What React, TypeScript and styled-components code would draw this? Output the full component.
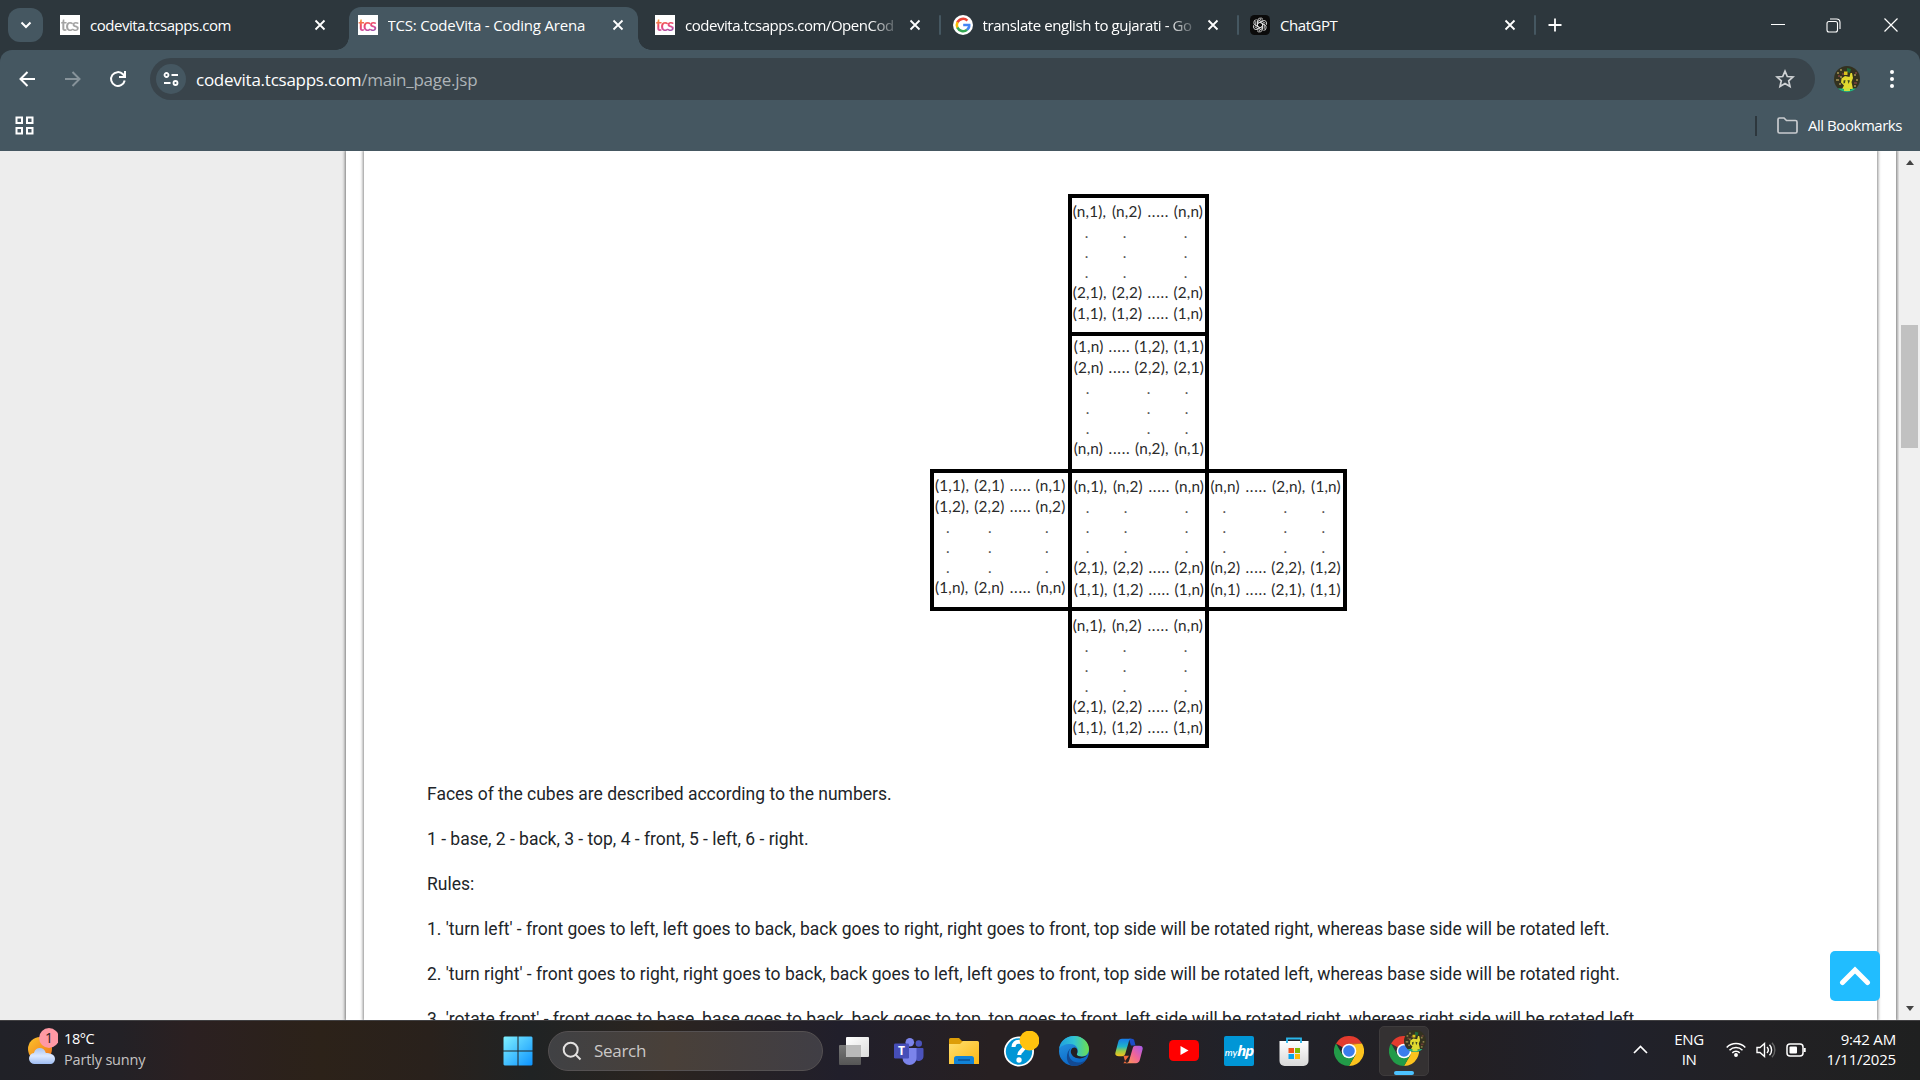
import React from 'react';
import styled, { createGlobalStyle, css } from 'styled-components';

const GlobalStyle = createGlobalStyle`
  *, *::before, *::after { box-sizing: border-box; }
  html, body { margin: 0; padding: 0; }
  body { width: 1920px; height: 1080px; overflow: hidden; background: #fff; }
  svg { display: block; flex: none; }
`;

const uiFont = '"Open Sans", "Noto Sans", sans-serif';
const frame = '#2d373d';
const toolbar = '#455761';

const Screen = styled.div`
  width: 1920px;
  height: 1080px;
  display: flex;
  flex-direction: column;
  overflow: hidden;
  font-family: ${uiFont};
`;

/* ---------- tab strip ---------- */

const TabStrip = styled.header`
  height: 50px;
  flex: none;
  display: flex;
  background: ${frame};
  color: #fff;
`;

const TabSearch = styled.button`
  width: 35px;
  height: 34px;
  margin: 8px 8px 0;
  padding: 0;
  border: 0;
  border-radius: 12px;
  background: ${toolbar};
  display: grid;
  place-items: center;
  color: #fff;
`;

const Tab = styled.div<{ $active?: boolean }>`
  position: relative;
  width: 289px;
  height: 43px;
  margin: 7px 8.5px 0 0;
  padding: 0 8px 7px 9px;
  flex: none;
  display: flex;
  align-items: center;
  ${({ $active }) =>
    $active &&
    css`
      background: ${toolbar};
      border-radius: 12px 12px 0 0;
      &::before,
      &::after {
        content: '';
        position: absolute;
        bottom: 0;
        width: 13px;
        height: 13px;
      }
      &::before {
        left: -13px;
        background: radial-gradient(circle at 0 0, transparent 12.5px, ${toolbar} 13px);
      }
      &::after {
        right: -13px;
        background: radial-gradient(circle at 100% 0, transparent 12.5px, ${toolbar} 13px);
      }
    `}
`;

const TabTitle = styled.span<{ $spacing: number; $fade?: boolean }>`
  width: 210px;
  margin-left: 10px;
  margin-right: 14px;
  overflow: hidden;
  white-space: nowrap;
  font-size: 15px;
  line-height: 24px;
  letter-spacing: ${({ $spacing }) => $spacing}px;
  ${({ $fade }) =>
    $fade &&
    css`
      mask-image: linear-gradient(90deg, #000 88%, transparent 103%);
    `}
`;

const TabDivider = styled.i`
  width: 2px;
  height: 20px;
  margin: 15px 2.5px 0 -4.5px;
  border-radius: 1px;
  background: ${toolbar};
  flex: none;
`;

const NewTab = styled.div`
  margin: 18px 0 0 9.5px;
`;

const WindowButtons = styled.div`
  margin-left: auto;
  height: 50px;
  padding-right: 22px;
  display: flex;
  align-items: center;
  gap: 43.5px;
  svg:nth-child(2) { margin-left: -3px; }
`;

const TcsIcon = styled.span<{ $grey?: boolean }>`
  width: 20px;
  height: 20px;
  flex: none;
  background: #fff;
  display: grid;
  place-items: center;
  overflow: hidden;
  b {
    font: 700 16.5px/18px Lato, sans-serif;
    letter-spacing: -1.4px;
    padding-right: 1.4px;
    color: transparent;
    background: ${({ $grey }) =>
      $grey ? '#a3a3a3' : 'linear-gradient(165deg, #f59a3a 20%, #ee4a62 45%, #dc5098 65%, #7d50b0 90%)'};
    background-clip: text;
    -webkit-background-clip: text;
  }
`;

/* ---------- toolbar ---------- */

const Chrome = styled.div`
  background: ${frame};
  flex: none;
`;

const Toolbar = styled.div`
  height: 101px;
  background: ${toolbar};
  border-radius: 12px 12px 0 0;
  display: flex;
  flex-direction: column;
  color: #fff;
`;

const NavRow = styled.div`
  height: 58px;
  display: flex;
  align-items: center;
  padding: 0 21px 0 18px;
`;

const NavIcons = styled.div`
  width: 132px;
  display: flex;
  align-items: center;
  gap: 27.5px;
`;

const Omnibox = styled.div`
  width: 1665px;
  height: 42px;
  border-radius: 21px;
  background: #39444b;
  display: flex;
  align-items: center;
  padding: 0 20px 0 6px;
`;

const SiteInfo = styled.span`
  width: 30px;
  height: 30px;
  border-radius: 50%;
  background: ${toolbar};
  display: grid;
  place-items: center;
`;

const Address = styled.span`
  flex: 1;
  margin-left: 10px;
  font-size: 17px;
  letter-spacing: -0.25px;
  padding-top: 1px;
  span { color: #aeb4b8; }
`;

const Avatar = styled.span<{ $size: number }>`
  width: ${({ $size }) => $size}px;
  height: ${({ $size }) => $size}px;
  flex: none;
  display: block;
  border-radius: 50%;
  overflow: hidden;
`;

const NavEnd = styled.div`
  flex: 1;
  display: flex;
  align-items: center;
  justify-content: space-between;
  padding: 0 0 0 19px;
`;

const Bookmarks = styled.div`
  height: 36px;
  display: flex;
  align-items: center;
  padding: 0 18px 1px 15px;
`;

const BookmarkDivider = styled.i`
  width: 2px;
  height: 20px;
  margin-left: auto;
  margin-right: 20px;
  background: ${frame};
`;

const BookmarkLabel = styled.span`
  width: 94px;
  margin-left: 10px;
  margin-bottom: 2px;
  white-space: nowrap;
  font-size: 15px;
  letter-spacing: -0.46px;
`;

/* ---------- page ---------- */

const Viewport = styled.main`
  position: relative;
  height: 869px;
  flex: none;
  display: flex;
  overflow: hidden;
  background: #ededed;
`;

const OuterSheet = styled.div`
  width: 1550px;
  margin-left: 346px;
  flex: none;
  padding: 0 19px 0 18px;
  background: #fff;
  box-shadow: 0 0 3px 1px #777;
`;

const Sheet = styled.article`
  height: 100%;
  padding: 43px 27px 0 63px;
  background: #fff;
  box-shadow: 0 0 3px 1px #888;
`;

const CubeNet = styled.figure`
  width: 417px;
  height: 554px;
  margin: 0 auto;
  display: grid;
  grid-template-columns: repeat(3, 137.7px);
  grid-template-rows: repeat(4, 137.6px);
`;

const Face = styled.div<{ $col: number; $row: number; $top: number; $left: number }>`
  grid-column: ${({ $col }) => $col};
  grid-row: ${({ $row }) => $row};
  width: 141.5px;
  height: 141.5px;
  border: 4px solid #000;
  padding: ${({ $top, $left }) => `${$top}px 0 0 ${$left}px`};
  font-family: Lato, sans-serif;
  font-size: 15.3px;
  color: #2a2a2a;
`;

const FaceLine = styled.div`
  height: 21.2px;
  line-height: 21px;
  width: 130.5px;
  white-space: nowrap;
  display: flex;
  justify-content: space-between;
  letter-spacing: 0.2px;
`;

const Ellipsis = styled.span`
  letter-spacing: 0.75px;
  margin: 0 -1px 0 0;
`;

const DotLine = styled.div<{ $cols: string }>`
  height: 20px;
  line-height: 21px;
  color: #555;
  display: grid;
  grid-template-columns: ${({ $cols }) => $cols};
`;

const Prose = styled.div`
  margin-top: 24px;
  font-family: Roboto, sans-serif;
  font-size: 17.5px;
  letter-spacing: -0.006px;
  color: #212529;
`;

const Paragraph = styled.p`
  height: 45px;
  margin: 0;
  line-height: 45px;
  white-space: nowrap;
`;

const Scrollbar = styled.div`
  width: 21px;
  margin-left: auto;
  height: 100%;
  flex: none;
  padding: 9px 0 9px;
  background: #f0f0f0;
  display: flex;
  flex-direction: column;
  align-items: center;
  z-index: 0;
`;

const Arrow = styled.i<{ $down?: boolean }>`
  border: 4.5px solid transparent;
  ${({ $down }) => ($down ? 'border-top: 5px solid #444; border-bottom: 0;' : 'border-bottom: 5px solid #444; border-top: 0;')}
`;

const Thumb = styled.div`
  width: 17px;
  height: 123px;
  margin: 160px 0 auto;
  background: #c1c1c1;
`;

const ToTop = styled.button`
  position: absolute;
  left: 1830px;
  top: 800px;
  width: 50px;
  height: 50px;
  padding: 0;
  border: 0;
  border-radius: 5px;
  background: #21bdff;
  display: grid;
  place-items: center;
`;

/* ---------- taskbar ---------- */

const Taskbar = styled.footer`
  height: 60px;
  flex: none;
  display: flex;
  align-items: center;
  border-top: 1px solid #414042;
  background: linear-gradient(90deg, #202127 0, #232126 120px, #2b2021 190px, #2c2219 320px, #29211c 430px, #202324 530px, #2b241f 660px, #211f2b 840px, #272022 990px, #272022 1100px, #20222a 1250px, #231f22 1450px, #20212b 1600px, #222124 1760px, #1f2020 1920px);
  color: #fff;
`;

const Weather = styled.div`
  width: 490px;
  height: 59px;
  padding: 5px 0 0 26px;
  display: flex;
`;

const WeatherText = styled.div`
  margin-left: 6px;
  font-size: 14.5px;
  line-height: 21px;
  padding-top: 2px;
  white-space: nowrap;
  letter-spacing: -0.4px;
  div + div { color: #c5c3c3; letter-spacing: -0.17px; }
`;

const Slot = styled.div<{ $active?: boolean }>`
  position: relative;
  width: 50px;
  height: 50px;
  margin: 0 2.5px;
  flex: none;
  display: grid;
  place-items: center;
  border-radius: 5px;
  ${({ $active }) =>
    $active &&
    css`
      background: #343132;
      border: 1px solid #3e3b3c;
      &::after {
        content: '';
        position: absolute;
        bottom: 0;
        width: 20px;
        height: 4px;
        border-radius: 2px;
        background: #4cc2ff;
      }
    `}
`;

const ProfileBadge = styled.span`
  position: absolute;
  left: 24px;
  top: 3px;
`;

const SearchBox = styled.div`
  width: 275px;
  height: 40px;
  margin: 0 3.5px 0 3px;
  padding-left: 13px;
  flex: none;
  border: 1px solid #555152;
  border-radius: 20px;
  background: linear-gradient(90deg, #404144, #494039 45%, #403e45);
  display: flex;
  align-items: center;
  gap: 12px;
  font-size: 17px;
  color: #cbc8c7;
  letter-spacing: -0.3px;
`;

const HpTile = styled.div`
  width: 30px;
  height: 30px;
  border-radius: 2px;
  background: #0096d6;
  display: flex;
  align-items: baseline;
  justify-content: center;
  font: italic 500 10px/29px Lato, sans-serif;
  b { font: italic 700 15px/28px "Open Sans", sans-serif; letter-spacing: -1px; }
`;

const Tray = styled.div`
  margin-left: auto;
  padding: 0 24px 2px 0;
  display: flex;
  align-items: center;
  font-size: 15px;
  line-height: 20px;
  white-space: nowrap;
`;

const Language = styled.div`
  width: 32px;
  margin: 0 21px 1px 25px;
  text-align: center;
  letter-spacing: -0.4px;
`;

const Status = styled.div`
  display: flex;
  align-items: center;
  gap: 10px;
`;

const Clock = styled.div`
  width: 90px;
  margin-bottom: 2px;
  text-align: right;
  letter-spacing: -0.18px;
`;

/* ---------- drawings ---------- */

const CloseIcon = () => (
  <svg width="12" height="12" viewBox="0 0 12 12" stroke="#fff" strokeWidth="1.8">
    <path d="M1.5 1.5l9 9m0-9l-9 9" />
  </svg>
);

const GoogleIcon = () => (
  <svg width="20" height="20" viewBox="0 0 20 20" fill="none" strokeWidth="2.6">
    <circle cx="10" cy="10" r="10" fill="#fff" />
    <path d="M14.400 5.600A6.200 6.200 0 0 0 4.400 7.500" stroke="#ea4335" />
    <path d="M4.500 7.200a6.200 6.200 0 0 0 0 5.600" stroke="#fbbc04" />
    <path d="M4.400 12.500a6.200 6.200 0 0 0 9.700 2.200" stroke="#34a853" />
    <path d="M10.200 10h6c.2 1.900-.6 3.700-2.200 4.800" stroke="#4285f4" />
  </svg>
);

const ChatGptIcon = () => (
  <svg width="20" height="20" viewBox="0 0 20 20">
    <rect width="20" height="20" rx="4.5" fill="#0b0b0b" />
    <g fill="none" stroke="#ddd" strokeWidth="0.9">
      {[0, 60, 120, 180, 240, 300].map((a) => (
        <path key={a} transform={`rotate(${a} 10 10)`} d="M7.500 11.500V6a3 3 0 0 1 5.500-1.600M7.700 8.500l4.100-2.300 3.600 2.100" />
      ))}
    </g>
  </svg>
);

const PlayerPhoto = ({ size }: { size: number }) => (
  <svg width={size} height={size} viewBox="0 0 26 26">
    <rect width="26" height="26" fill="#33321f" />
    <g fill="#8a7c45">
      <rect x="3" y="6" width="2" height="2" /><rect x="6" y="10" width="2" height="2" /><rect x="2" y="13" width="3" height="2" />
      <rect x="20" y="8" width="2" height="2" /><rect x="22" y="13" width="2" height="2" /><rect x="6" y="3" width="2" height="2" />
      <rect x="5" y="17" width="2" height="2" /><rect x="20" y="19" width="2" height="2" />
    </g>
    <g fill="#6a3e36"><rect x="4" y="9" width="2" height="2" /><rect x="21" y="6" width="2" height="2" /><rect x="20" y="16" width="3" height="2" /><rect x="8" y="7" width="2" height="2" /></g>
    <path d="M13 2l4 1-1 4-3-1z" fill="#1e6a3b" />
    <path d="M10 5.500h3.500V9H10z" fill="#d9c41c" />
    <path d="M16.500 7h1.500l1 5-1.500 4 1.500 7H8l2-3.500-3-3 .5-4L11 10l4.500 1z" fill="#e0d92f" />
    <path d="M9.500 14.500l2-.5-.5 3-1.500.5zM13.500 14l2.500.5-1.500 3.500z" fill="#3f4a20" />
    <path d="M4 22.500h5l1 1h7l2-1h3V26H4z" fill="#25b483" />
    <path d="M10 22h6v3h-6z" fill="#c9e03a" />
  </svg>
);

const ChromeIcon = () => (
  <svg width="30" height="30" viewBox="0 0 30 30">
    <path d="M15 15L2 7.5A15 15 0 0 1 28 7.5H15z" fill="#e33b2e" />
    <path d="M28 7.5A15 15 0 0 1 15 30l6.5-11.2L15 7.5z" fill="#fcc31e" />
    <path d="M2 7.500A15 15 0 0 0 15 30l6.400-11.200L15 20l-6.500-1.200z" fill="#229b48" />
    <path d="M15 7.500h13L15 9z" fill="#e33b2e" />
    <circle cx="15" cy="15" r="7.300" fill="#fff" />
    <circle cx="15" cy="15" r="5.800" fill="#3b7ded" />
  </svg>
);

const TaskViewIcon = () => (
  <svg width="30" height="28" viewBox="0 0 30 28">
    <defs>
      <linearGradient id="tv1" x2="1" y2="1"><stop stopColor="#fff" /><stop offset="1" stopColor="#dcdcdc" /></linearGradient>
      <linearGradient id="tv2" x2="0" y2="1"><stop stopColor="#777" /><stop offset="1" stopColor="#555" /></linearGradient>
    </defs>
    <rect y="8" width="22" height="20" rx="1" fill="url(#tv2)" />
    <rect x="7" width="23" height="20" rx="1" fill="url(#tv1)" />
    <path d="M7 8h15v12H8a1 1 0 0 1-1-1z" fill="#b9b9b9" />
  </svg>
);

const TeamsIcon = () => (
  <svg width="30" height="30" viewBox="0 0 30 30">
    <circle cx="24.8" cy="7.5" r="3.2" fill="#4b53bc" />
    <path d="M20 12h8.5a1 1 0 0 1 1 1v7a5 5 0 0 1-9 3z" fill="#4b53bc" />
    <circle cx="15.8" cy="6.2" r="4.3" fill="#7b83eb" />
    <path d="M9 12h13.5v10a7 7 0 0 1-14 0z" fill="#7b83eb" />
    <rect y="7.5" width="15" height="15" rx="1.3" fill="#464eb8" />
    <text x="7.500" y="19.300" fontSize="12" fontWeight="700" fontFamily="Open Sans, sans-serif" textAnchor="middle" fill="#fff">T</text>
  </svg>
);

const FolderIcon = () => (
  <svg width="30" height="30" viewBox="0 0 30 30">
    <defs><linearGradient id="fo" x2="1" y2="1"><stop stopColor="#ffdf70" /><stop offset="1" stopColor="#fdb813" /></linearGradient></defs>
    <path d="M0 9V3.5a1.5 1.5 0 0 1 1.5-1.5H10l3 3h3v4z" fill="#dd9d08" />
    <path d="M0 8h11l3-3h14.500a1.500 1.500 0 0 1 1.500 1.500V28H0z" fill="url(#fo)" />
    <path d="M5 28v-5.500a2.500 2.500 0 0 1 2.500-2.500h15a2.500 2.500 0 0 1 2.500 2.500V28z" fill="#1183d8" />
    <path d="M9 24h12" stroke="#0b4f90" strokeWidth="1.400" />
  </svg>
);

const HelpIcon = () => (
  <svg width="40" height="40" viewBox="-1 0 40 40">
    <circle cx="19" cy="20.500" r="15" fill="#fff" />
    <circle cx="19" cy="20.500" r="13.200" fill="#0096d6" />
    <path d="M13.500 16c0-3.500 2.600-5.300 5.500-5.300 3.200 0 5.400 1.900 5.400 4.600 0 4-5.200 4.400-5.200 8.700" fill="none" stroke="#fff" strokeWidth="4" />
    <circle cx="19" cy="29" r="2.700" fill="#fff" />
    <circle cx="29.500" cy="9.500" r="9.900" fill="#ffc20e" />
  </svg>
);

const EdgeIcon = () => (
  <svg width="30" height="30" viewBox="0 0 30 30">
    <defs>
      <linearGradient id="e1" x1="0" x2="1"><stop stopColor="#1f9fe0" /><stop offset=".5" stopColor="#31c3d4" /><stop offset="1" stopColor="#6ee04c" /></linearGradient>
      <linearGradient id="e2" x2=".4" y2="1"><stop stopColor="#2a9de6" /><stop offset="1" stopColor="#0b66c6" /></linearGradient>
    </defs>
    <circle cx="15" cy="15" r="15" fill="url(#e2)" />
    <path d="M0 13C1 5 7.500 0 15 0c9 0 15 6.500 15 13 0 5-3.500 7.500-7.500 7.500-4 0-5.300-1.400-4.300-2.900 1.800-2.700.2-9.600-7.200-9.600C6 8 1.500 10 0 13z" fill="url(#e1)" />
    <path d="M12 12c-5 6-1 15 8 14.500 3-.1 5.500-1.500 7.500-3.500-3 5-8 7.200-13 7C7 29 5.500 17 12 12z" fill="#134a93" />
    <path d="M15.500 11.500c-3 0-4.300 3-3.300 6 1.300 3.700 6 5.500 10 4.700 3-.5 5-1.700 6.300-3.200-2.500 1.800-6.500 2.200-9 1-1.700-.8-2.100-1.700-1.300-3 .7-1.500.2-5.500-2.700-5.500z" fill="#241f23" />
  </svg>
);

const CopilotIcon = () => (
  <svg width="28" height="28" viewBox="0 0 30 30">
    <defs>
      <linearGradient id="c1" x2="0" y2="1"><stop stopColor="#167bea" /><stop offset=".45" stopColor="#20b4c8" /><stop offset=".7" stopColor="#9acb45" /><stop offset="1" stopColor="#f6c11d" /></linearGradient>
      <linearGradient id="c2" x1="1" x2="0" y2="1"><stop stopColor="#a45bf0" /><stop offset=".5" stopColor="#f0649a" /><stop offset="1" stopColor="#ff9a4c" /></linearGradient>
    </defs>
    <path d="M15 2h3c2 0 2.500 1 3 3l1 4h-5z" fill="#1d4dc8" />
    <path d="M9 28h5c-2 0-3-1-3.500-3L9 20h6z" fill="#f06a3a" />
    <path d="M7.500 2H18c-2 0-2.700 1-3.400 3.500L11 18c-.6 1.800-1.500 2.500-3.300 2.500H4c-3 0-4.200-1.300-3.500-4L3.500 5c.6-2 2-3 4-3z" fill="url(#c1)" />
    <path d="M22.500 28H12c2 0 2.700-1 3.400-3.500L19 12c.6-1.800 1.500-2.500 3.300-2.500H26c3 0 4.200 1.300 3.500 4L26.500 25c-.6 2-2 3-4 3z" fill="url(#c2)" />
  </svg>
);

const StoreIcon = () => (
  <svg width="30" height="30" viewBox="0 0 30 30">
    <defs><linearGradient id="st" x2="0" y2="1"><stop stopColor="#fff" /><stop offset="1" stopColor="#d8d8d8" /></linearGradient></defs>
    <path d="M.5 5h29v20a5 5 0 0 1-5 5h-19a5 5 0 0 1-5-5z" fill="url(#st)" />
    <path d="M8 7V2.500h14V7" fill="none" stroke="#29b6ea" strokeWidth="1.800" />
    <path d="M9.500 12H15v5H9.500z" fill="#f1511b" /><path d="M16 12h5v5h-5z" fill="#80bb02" />
    <path d="M9.500 18H15v5H9.500z" fill="#06a5ee" /><path d="M16 18h5v5h-5z" fill="#fbbc09" />
  </svg>
);

const WeatherIcon = () => (
  <svg width="32" height="48" viewBox="0 0 32 48">
    <defs>
      <linearGradient id="sun" x2="1" y2="1"><stop stopColor="#fbc42c" /><stop offset="1" stopColor="#f0701a" /></linearGradient>
      <linearGradient id="cloud" x2="0" y2="1"><stop stopColor="#a9c4f0" /><stop offset=".5" stopColor="#dbe8ff" /><stop offset="1" stopColor="#9ebcf2" /></linearGradient>
    </defs>
    <circle cx="14" cy="23" r="12" fill="url(#sun)" />
    <path d="M9 38a5.500 5.500 0 0 1-1-11c1-4 3.500-5 6-5s5 1.500 5.800 5c4 0 9.200 1.500 9.200 5.700 0 3-2 5.300-5 5.300z" fill="url(#cloud)" />
    <circle cx="23" cy="12" r="9.900" fill="#ff99a4" />
    <text x="23" y="17" fontSize="14" fontFamily="Open Sans, sans-serif" textAnchor="middle" fill="#2a2020">1</text>
  </svg>
);

/* ---------- content ---------- */

type Row = string[] | 'dots';
interface FaceData { col: number; row: number; top: number; left: number; dots: string; rows: Row[] }

const lateGap = '12px 61px 38px 10px';
const earlyGap = '12px 38px 61px 10px';

const faces: FaceData[] = [
  { col: 2, row: 1, top: 3, left: 1, dots: earlyGap, rows: [['(n,1),', '(n,2)', '.....', '(n,n)'], 'dots', 'dots', 'dots', ['(2,1),', '(2,2)', '.....', '(2,n)'], ['(1,1),', '(1,2)', '.....', '(1,n)']] },
  { col: 2, row: 2, top: 0, left: 2, dots: lateGap, rows: [['(1,n)', '.....', '(1,2),', '(1,1)'], ['(2,n)', '.....', '(2,2),', '(2,1)'], 'dots', 'dots', 'dots', ['(n,n)', '.....', '(n,2),', '(n,1)']] },
  { col: 1, row: 3, top: 1.5, left: 1, dots: '11px 42px 57px 10px', rows: [['(1,1),', '(2,1)', '.....', '(n,1)'], ['(1,2),', '(2,2)', '.....', '(n,2)'], 'dots', 'dots', 'dots', ['(1,n),', '(2,n)', '.....', '(n,n)']] },
  { col: 2, row: 3, top: 3, left: 2, dots: earlyGap, rows: [['(n,1),', '(n,2)', '.....', '(n,n)'], 'dots', 'dots', 'dots', ['(2,1),', '(2,2)', '.....', '(2,n)'], ['(1,1),', '(1,2)', '.....', '(1,n)']] },
  { col: 3, row: 3, top: 3, left: 1, dots: lateGap, rows: [['(n,n)', '.....', '(2,n),', '(1,n)'], 'dots', 'dots', 'dots', ['(n,2)', '.....', '(2,2),', '(1,2)'], ['(n,1)', '.....', '(2,1),', '(1,1)']] },
  { col: 2, row: 4, top: 4, left: 1, dots: earlyGap, rows: [['(n,1),', '(n,2)', '.....', '(n,n)'], 'dots', 'dots', 'dots', ['(2,1),', '(2,2)', '.....', '(2,n)'], ['(1,1),', '(1,2)', '.....', '(1,n)']] },
];

const paragraphs = [
  'Faces of the cubes are described according to the numbers.',
  '1 - base, 2 - back, 3 - top, 4 - front, 5 - left, 6 - right.',
  'Rules:',
  "1. 'turn left' - front goes to left, left goes to back, back goes to right, right goes to front, top side will be rotated right, whereas base side will be rotated left.",
  "2. 'turn right' - front goes to right, right goes to back, back goes to left, left goes to front, top side will be rotated left, whereas base side will be rotated right.",
  "3. 'rotate front' - front goes to base, base goes to back, back goes to top, top goes to front, left side will be rotated right, whereas right side will be rotated left.",
];

const CubeFace = ({ data }: { data: FaceData }) => (
  <Face $col={data.col} $row={data.row} $top={data.top} $left={data.left}>
    {data.rows.map((row, i) =>
      row === 'dots' ? (
        <DotLine key={i} $cols={data.dots}>
          <span /><span>.</span><span>.</span><span>.</span>
        </DotLine>
      ) : (
        <FaceLine key={i}>
          {row.map((part, k) => (part === '.....' ? <Ellipsis key={k}>{part}</Ellipsis> : <span key={k}>{part}</span>))}
        </FaceLine>
      ),
    )}
  </Face>
);

export default function App() {
  return (
    <Screen>
      <GlobalStyle />
      <TabStrip>
        <TabSearch>
          <svg width="12" height="8" viewBox="0 0 12 8" fill="none" stroke="#fff" strokeWidth="2"><path d="M1.500 1.500L6 6l4.500-4.500" /></svg>
        </TabSearch>
        <Tab><TcsIcon $grey><b>tcs</b></TcsIcon><TabTitle $spacing={-0.47}>codevita.tcsapps.com</TabTitle><CloseIcon /></Tab>
        <Tab $active><TcsIcon><b>tcs</b></TcsIcon><TabTitle $spacing={-0.2}>TCS: CodeVita - Coding Arena</TabTitle><CloseIcon /></Tab>
        <Tab><TcsIcon><b>tcs</b></TcsIcon><TabTitle $spacing={-0.47} $fade>codevita.tcsapps.com/OpenCod</TabTitle><CloseIcon /></Tab>
        <TabDivider />
        <Tab><GoogleIcon /><TabTitle $spacing={-0.42} $fade>translate english to gujarati - Go</TabTitle><CloseIcon /></Tab>
        <TabDivider />
        <Tab><ChatGptIcon /><TabTitle $spacing={-0.45}>ChatGPT</TabTitle><CloseIcon /></Tab>
        <TabDivider />
        <NewTab>
          <svg width="14" height="14" viewBox="0 0 14 14" stroke="#fff" strokeWidth="1.800"><path d="M7 .5v13M.5 7h13" /></svg>
        </NewTab>
        <WindowButtons>
          <svg width="14" height="14" viewBox="0 0 14 14" stroke="#fff"><path d="M0 6.500h14" /></svg>
          <svg width="15" height="15" viewBox="0 0 15 15" fill="none" stroke="#fff" strokeWidth="1.100"><rect x="1" y="3.500" width="10.500" height="10.500" rx="2" /><path d="M4 1h6.500A3.500 3.500 0 0 1 14 4.500V11" /></svg>
          <svg width="14" height="14" viewBox="0 0 14 14" stroke="#fff" strokeWidth="1.200"><path d="M.5.5l13 13m0-13l-13 13" /></svg>
        </WindowButtons>
      </TabStrip>

      <Chrome>
        <Toolbar>
          <NavRow>
            <NavIcons>
              <svg width="18" height="18" viewBox="0 0 18 18" fill="none" stroke="#fff" strokeWidth="2"><path d="M17 9H3M9.500 2L2.500 9l7 7" /></svg>
              <svg width="18" height="18" viewBox="0 0 18 18" fill="none" stroke="#87939a" strokeWidth="2"><path d="M1 9h14M8.500 2l7 7-7 7" /></svg>
              <svg width="18" height="18" viewBox="0 0 18 18" fill="none" stroke="#fff" strokeWidth="2"><path d="M15.700 10.500A6.900 6.900 0 1 1 14 4.300L16 6.500M16 1v6h-6" /></svg>
            </NavIcons>
            <Omnibox>
              <SiteInfo>
                <svg width="16" height="16" viewBox="0 0 16 16" fill="none" stroke="#fff" strokeWidth="1.800"><circle cx="3.500" cy="4" r="2" /><path d="M8.500 4H15M1 12h6.500" /><circle cx="12.500" cy="12" r="2" /></svg>
              </SiteInfo>
              <Address>codevita.tcsapps.com<span>/main_page.jsp</span></Address>
              <svg width="20" height="20" viewBox="0 0 20 20" fill="none" stroke="#cfd2d4" strokeWidth="1.700"><path d="M10 2.200l2.300 5.300 5.700.5-4.300 3.800 1.300 5.700-5-3-5 3 1.300-5.700L2 8l5.700-.5z" /></svg>
            </Omnibox>
            <NavEnd>
              <Avatar $size={26}><PlayerPhoto size={26} /></Avatar>
              <svg width="14" height="20" viewBox="0 0 14 20" fill="#fff"><circle cx="7" cy="3" r="2" /><circle cx="7" cy="10" r="2" /><circle cx="7" cy="17" r="2" /></svg>
            </NavEnd>
          </NavRow>
          <Bookmarks>
            <svg width="19" height="19" viewBox="0 0 19 19" fill="none" stroke="#fff" strokeWidth="2"><rect x="1.500" y="1.500" width="5.500" height="5.500" /><rect x="12" y="1.500" width="5.500" height="5.500" /><rect x="1.500" y="12" width="5.500" height="5.500" /><rect x="12" y="12" width="5.500" height="5.500" /></svg>
            <BookmarkDivider />
            <svg width="21" height="17" viewBox="0 0 21 17" fill="none" stroke="#c9cccf" strokeWidth="1.700"><path d="M1 14.500v-12A1.500 1.500 0 0 1 2.500 1H7l2.500 2.500h9A1.500 1.500 0 0 1 20 5v9.500a1.500 1.500 0 0 1-1.500 1.500h-16A1.500 1.500 0 0 1 1 14.500z" /></svg>
            <BookmarkLabel>All Bookmarks</BookmarkLabel>
          </Bookmarks>
        </Toolbar>
      </Chrome>

      <Viewport>
        <OuterSheet>
          <Sheet>
            <CubeNet>{faces.map((f, i) => <CubeFace key={i} data={f} />)}</CubeNet>
            <Prose>{paragraphs.map((text, i) => <Paragraph key={i}>{text}</Paragraph>)}</Prose>
          </Sheet>
        </OuterSheet>
        <Scrollbar><Arrow /><Thumb /><Arrow $down /></Scrollbar>
        <ToTop>
          <svg width="32" height="20" viewBox="0 0 32 20" fill="none" stroke="#fff" strokeWidth="5" strokeLinecap="round"><path d="M3.500 16.500L16 4l12.500 12.500" /></svg>
        </ToTop>
      </Viewport>

      <Taskbar>
        <Weather>
          <WeatherIcon />
          <WeatherText><div>18°C</div><div>Partly sunny</div></WeatherText>
        </Weather>
        <Slot>
          <svg width="30" height="30" viewBox="0 0 30 30">
            <defs><linearGradient id="win" x2="1" y2="1"><stop stopColor="#7ff0ff" /><stop offset="1" stopColor="#0c93ff" /></linearGradient></defs>
            <path d="M1.500.5H14.500v14H.5v-13zM15.500.5h13l1 1v13h-14zM.5 15.500h14v14h-13l-1-1zM15.500 15.500h14v13l-1 1h-13z" fill="url(#win)" />
          </svg>
        </Slot>
        <SearchBox>
          <svg width="20" height="20" viewBox="0 0 20 20" fill="none" stroke="#e3e1e0" strokeWidth="2"><circle cx="8.700" cy="8.700" r="7" /><path d="M13.500 13.500l5 5" /></svg>
          Search
        </SearchBox>
        <Slot><TaskViewIcon /></Slot>
        <Slot><TeamsIcon /></Slot>
        <Slot><FolderIcon /></Slot>
        <Slot><HelpIcon /></Slot>
        <Slot><EdgeIcon /></Slot>
        <Slot><CopilotIcon /></Slot>
        <Slot>
          <svg width="30" height="21" viewBox="0 0 30 21"><rect width="30" height="21" rx="4.500" fill="#f00" /><path d="M11.500 6v9l8-4.500z" fill="#fff" /></svg>
        </Slot>
        <Slot><HpTile>my<b>hp</b></HpTile></Slot>
        <Slot><StoreIcon /></Slot>
        <Slot><ChromeIcon /></Slot>
        <Slot $active>
          <ChromeIcon />
          <ProfileBadge><Avatar $size={22}><PlayerPhoto size={22} /></Avatar></ProfileBadge>
        </Slot>
        <Tray>
          <svg width="15" height="9" viewBox="0 0 15 9" fill="none" stroke="#fff" strokeWidth="1.700"><path d="M1 8l6.500-6.500L14 8" /></svg>
          <Language><div>ENG</div><div>IN</div></Language>
          <Status>
            <svg width="20" height="15" viewBox="0 0 20 15" fill="none" stroke="#fff" strokeWidth="1.500"><path d="M.7 5.500a13 13 0 0 1 18.600 0M3.500 8.200a9.200 9.200 0 0 1 13 0M6.300 10.900a5.200 5.200 0 0 1 7.400 0" /><circle cx="10" cy="13" r="1.200" fill="#fff" /></svg>
            <svg width="20" height="16" viewBox="0 0 20 16" fill="none" stroke="#fff" strokeWidth="1.400"><path d="M1 5.500h3L8.500 1.500v13L4 10.500H1zM11 5a4.500 4.500 0 0 1 0 6M13.500 2.800a7.500 7.500 0 0 1 0 10.400" /><path d="M16 .8a10.500 10.500 0 0 1 0 14.400" stroke="#666" /></svg>
            <svg width="20" height="14" viewBox="0 0 20 14" fill="none" stroke="#fff" strokeWidth="1.500"><rect x="1" y="1" width="16" height="12" rx="3" /><rect x="3.500" y="3.500" width="7.500" height="7" rx="1" fill="#fff" stroke="none" /><path d="M18.700 5v4" strokeWidth="2" /></svg>
          </Status>
          <Clock><div>9:42 AM</div><div>1/11/2025</div></Clock>
        </Tray>
      </Taskbar>
    </Screen>
  );
}
